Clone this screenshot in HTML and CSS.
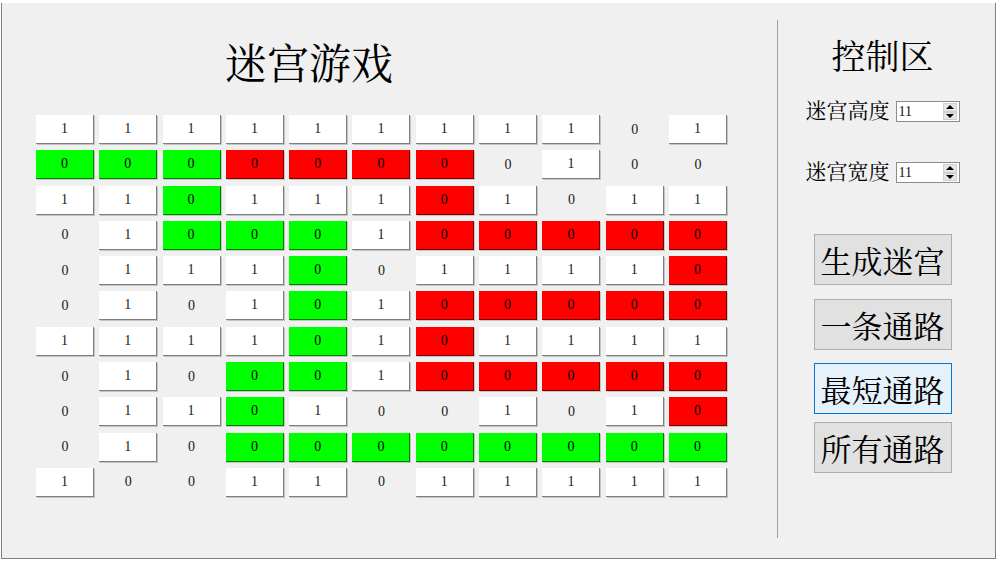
FILE: index.html
```html
<!DOCTYPE html>
<html lang="zh">
<head>
<meta charset="utf-8">
<title>迷宫游戏</title>
<link rel="stylesheet" href="styles.css">
</head>
<body>
<div class="window">
  <div class="left">
    <div class="title">迷宫游戏</div>
    <div class="grid">
      <div class="c w">1</div><div class="c w">1</div><div class="c w">1</div><div class="c w">1</div><div class="c w">1</div><div class="c w">1</div><div class="c w">1</div><div class="c w">1</div><div class="c w">1</div><div class="c p">0</div><div class="c w">1</div>
      <div class="c g">0</div><div class="c g">0</div><div class="c g">0</div><div class="c r">0</div><div class="c r">0</div><div class="c r">0</div><div class="c r">0</div><div class="c p">0</div><div class="c w">1</div><div class="c p">0</div><div class="c p">0</div>
      <div class="c w">1</div><div class="c w">1</div><div class="c g">0</div><div class="c w">1</div><div class="c w">1</div><div class="c w">1</div><div class="c r">0</div><div class="c w">1</div><div class="c p">0</div><div class="c w">1</div><div class="c w">1</div>
      <div class="c p">0</div><div class="c w">1</div><div class="c g">0</div><div class="c g">0</div><div class="c g">0</div><div class="c w">1</div><div class="c r">0</div><div class="c r">0</div><div class="c r">0</div><div class="c r">0</div><div class="c r">0</div>
      <div class="c p">0</div><div class="c w">1</div><div class="c w">1</div><div class="c w">1</div><div class="c g">0</div><div class="c p">0</div><div class="c w">1</div><div class="c w">1</div><div class="c w">1</div><div class="c w">1</div><div class="c r">0</div>
      <div class="c p">0</div><div class="c w">1</div><div class="c p">0</div><div class="c w">1</div><div class="c g">0</div><div class="c w">1</div><div class="c r">0</div><div class="c r">0</div><div class="c r">0</div><div class="c r">0</div><div class="c r">0</div>
      <div class="c w">1</div><div class="c w">1</div><div class="c w">1</div><div class="c w">1</div><div class="c g">0</div><div class="c w">1</div><div class="c r">0</div><div class="c w">1</div><div class="c w">1</div><div class="c w">1</div><div class="c w">1</div>
      <div class="c p">0</div><div class="c w">1</div><div class="c p">0</div><div class="c g">0</div><div class="c g">0</div><div class="c w">1</div><div class="c r">0</div><div class="c r">0</div><div class="c r">0</div><div class="c r">0</div><div class="c r">0</div>
      <div class="c p">0</div><div class="c w">1</div><div class="c w">1</div><div class="c g">0</div><div class="c w">1</div><div class="c p">0</div><div class="c p">0</div><div class="c w">1</div><div class="c p">0</div><div class="c w">1</div><div class="c r">0</div>
      <div class="c p">0</div><div class="c w">1</div><div class="c p">0</div><div class="c g">0</div><div class="c g">0</div><div class="c g">0</div><div class="c g">0</div><div class="c g">0</div><div class="c g">0</div><div class="c g">0</div><div class="c g">0</div>
      <div class="c w">1</div><div class="c p">0</div><div class="c p">0</div><div class="c w">1</div><div class="c w">1</div><div class="c p">0</div><div class="c w">1</div><div class="c w">1</div><div class="c w">1</div><div class="c w">1</div><div class="c w">1</div>
    </div>
  </div>
  <div class="sep"></div>
  <div class="right">
    <div class="panel-title">控制区</div>
    <div class="spin-row first">
      <span class="label">迷宫高度</span>
      <div class="spin"><span class="spin-val">11</span><div class="arrows"><span class="arr up"></span><span class="arr down"></span></div></div>
    </div>
    <div class="spin-row second">
      <span class="label">迷宫宽度</span>
      <div class="spin"><span class="spin-val">11</span><div class="arrows"><span class="arr up"></span><span class="arr down"></span></div></div>
    </div>
    <button class="btn b1">生成迷宫</button>
    <button class="btn b2">一条通路</button>
    <button class="btn b3 focus">最短通路</button>
    <button class="btn b4">所有通路</button>
  </div>
</div>
</body>
</html>
```
FILE: styles.css
```css
* { box-sizing: border-box; }
body {
  margin: 0;
  background: #ffffff;
  font-family: "Liberation Serif", "Noto Serif CJK SC", "Source Han Serif SC", "Noto Sans CJK SC", serif;
}
.window {
  margin: 3px 0 0 1px;
  width: 995px;
  height: 556px;
  background: #f0f0f0;
  border-left: 1px solid #7f7f7f;
  border-right: 1px solid #7f7f7f;
  border-bottom: 1px solid #7f7f7f;
  display: flex;
}
.left {
  width: 775px;
  padding-left: 34px;
}
.title {
  margin-top: 41px;
  padding-left: 189px;
  font-size: 42px;
  line-height: 42px;
  color: #000;
}
.grid {
  margin-top: 29px;
  display: grid;
  grid-template-columns: repeat(11, 58px);
  grid-auto-rows: 29px;
  column-gap: 5.3px;
  row-gap: 6.3px;
}
.c {
  display: flex;
  align-items: center;
  justify-content: center;
  font-family: "Liberation Serif", serif;
  font-size: 14px;
  color: #1a1a1a;
}
.w, .g, .r {
  border-right: 1px solid rgba(0, 0, 0, 0.5);
  border-bottom: 1px solid rgba(0, 0, 0, 0.5);
  box-shadow: 1px 1px 0 rgba(0, 0, 0, 0.18);
}
.w { background: #ffffff; }
.g { background: #00ff00; color: #000; }
.r { background: #ff0000; color: #000; }
.sep {
  width: 1px;
  background: #a0a0a0;
  margin-top: 17px;
  height: 518px;
}
.right {
  flex: 1;
  padding-right: 8px;
  display: flex;
  flex-direction: column;
  align-items: center;
}
.panel-title {
  margin-top: 38px;
  font-size: 34px;
  line-height: 34px;
  color: #000;
}
.spin-row {
  display: flex;
  align-items: center;
  height: 21px;
}
.spin-row.first { margin-top: 26px; }
.spin-row.second { margin-top: 40px; }
.label {
  font-size: 21px;
  line-height: 21px;
  color: #000;
  margin-right: 6px;
}
.spin {
  width: 64px;
  height: 21px;
  background: #fff;
  border: 1px solid #8c8c8c;
  display: flex;
  align-items: center;
  justify-content: space-between;
}
.spin-val {
  font-family: "Liberation Serif", serif;
  font-size: 14px;
  padding-left: 2px;
  color: #111;
}
.arrows {
  width: 14px;
  height: 17px;
  margin-right: 2px;
  display: flex;
  flex-direction: column;
}
.arr {
  flex: 1;
  background: #e6e6e6;
  border: 1px solid #d0d0d0;
  display: flex;
  align-items: center;
  justify-content: center;
}
.arr::after {
  content: "";
  width: 0;
  height: 0;
  border-left: 4px solid transparent;
  border-right: 4px solid transparent;
}
.up::after { border-bottom: 4px solid #000; }
.down::after { border-top: 4px solid #000; }
.btn {
  width: 138px;
  height: 51px;
  padding: 0;
  background: #e1e1e1;
  border: 1px solid #adadad;
  font-family: "Noto Serif CJK SC", "Source Han Serif SC", "Noto Sans CJK SC", serif;
  font-size: 31px;
  line-height: 31px;
  color: #000;
}
.btn.focus {
  background: #e5f1fb;
  border-color: #0078d7;
}
.b1 { margin-top: 51px; }
.b2 { margin-top: 14px; }
.b3 { margin-top: 13px; }
.b4 { margin-top: 8px; }
```
